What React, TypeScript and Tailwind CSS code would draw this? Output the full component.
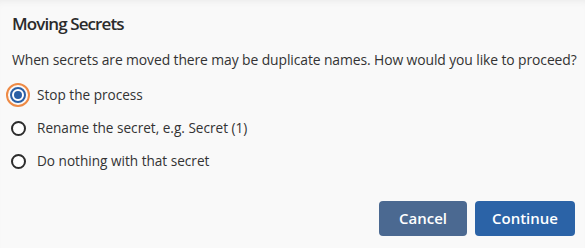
import { useState } from 'react'

const options = [
  { id: 'stop', label: 'Stop the process' },
  { id: 'rename', label: 'Rename the secret, e.g. Secret (1)' },
  { id: 'nothing', label: 'Do nothing with that secret' },
]

function Radio({ checked }: { checked: boolean }) {
  if (checked) {
    return (
      <span className="flex h-[24px] w-[24px] items-center justify-center rounded-full border-2 border-[#ee8a45]">
        <span className="flex h-[16px] w-[16px] items-center justify-center rounded-full border-2 border-[#2a5fa5] bg-white">
          <span className="h-[8px] w-[8px] rounded-full bg-[#2a5fa5]" />
        </span>
      </span>
    )
  }
  return (
    <span className="flex h-[24px] w-[24px] items-center justify-center">
      <span className="h-[15px] w-[15px] rounded-full border-2 border-[#2d2d2d] bg-white" />
    </span>
  )
}

export default function App() {
  const [value, setValue] = useState('stop')

  return (
    <div
      className="flex h-[248px] w-[585px] flex-col bg-[#f9f9f9] text-[#333] shadow-[inset_0_6px_8px_-6px_rgba(0,0,0,0.08)]"
      style={{ fontFamily: '"Open Sans", sans-serif' }}
    >
      <h2 className="ml-[12px] mt-[13px] text-[17px] font-semibold leading-[22px] tracking-[-0.9px] text-[#2b2b2b]">
        Moving Secrets
      </h2>
      <p className="ml-[12px] mt-[15px] whitespace-nowrap text-[13.9px] leading-[19px] tracking-[-0.1px]">
        When secrets are moved there may be duplicate names. How would you like to proceed?
      </p>
      <div className="mt-[14px] flex flex-col gap-[9px] pl-[6px]">
        {options.map((o) => (
          <label
            key={o.id}
            className="flex cursor-pointer items-center gap-[7px] text-[13.6px] leading-[24px]"
            onClick={() => setValue(o.id)}
          >
            <Radio checked={value === o.id} />
            <span>{o.label}</span>
          </label>
        ))}
      </div>
      <div className="mr-[10px] mt-auto mb-[12px] flex justify-end gap-[8px]">
        <button className="h-[35px] w-[88px] rounded-[4px] bg-[#4b6991] text-[15px] font-semibold text-white">
          Cancel
        </button>
        <button className="h-[35px] w-[100px] rounded-[4px] bg-[#2b63a7] text-[15px] font-semibold text-white">
          Continue
        </button>
      </div>
    </div>
  )
}
